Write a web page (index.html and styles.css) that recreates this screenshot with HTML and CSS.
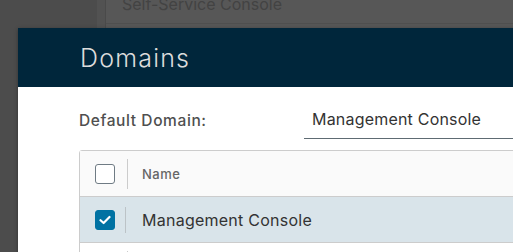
FILE: index.html
```html
<!DOCTYPE html>
<html lang="en">
<head>
  <meta charset="UTF-8">
  <meta name="viewport" content="width=device-width, initial-scale=1.0">
  <title>Domains</title>
  <link rel="stylesheet" href="styles.css">
</head>
<body>
  <div class="backdrop">
    <aside class="sidenav"><div class="sidenav-edge"></div></aside>
    <main class="content">
      <div class="content-head">Self-Service Console</div>
    </main>
  </div>

  <div class="modal">
    <header class="modal-header">
      <h2>Domains</h2>
    </header>
    <div class="modal-body">
      <div class="form-row">
        <label class="form-label">Default Domain:</label>
        <div class="select">Management Console</div>
      </div>

      <div class="datagrid">
        <div class="dg-row dg-head">
          <div class="dg-check"><span class="checkbox"></span></div>
          <div class="dg-cell">Name</div>
        </div>
        <div class="dg-row selected">
          <div class="dg-check">
            <span class="checkbox checked">
              <svg width="12" height="10" viewBox="0 0 12 10"><path d="M1.5 5.2 L4.6 8 L10.5 2" fill="none" stroke="#fff" stroke-width="2.2" stroke-linecap="round" stroke-linejoin="round"/></svg>
            </span>
          </div>
          <div class="dg-cell">Management Console</div>
        </div>
        <div class="dg-row">
          <div class="dg-check"><span class="checkbox"></span></div>
          <div class="dg-cell">Self-Service Console</div>
        </div>
      </div>
    </div>
  </div>
</body>
</html>
```

FILE: styles.css
```css
body {
  margin: 0;
  font-family: Inter, "Liberation Sans", sans-serif;
  background-color: #575757;
  overflow: hidden;
  height: 252px;
}
.backdrop {
  display: flex;
  height: 252px;
}
.sidenav {
  width: 106px;
  background-color: #4c4c4c;
  display: flex;
  justify-content: flex-end;
}
.sidenav-edge {
  width: 8px;
  background-color: #525252;
  border-right: 1px solid #4a4a4a;
}
.content {
  flex: 1;
}
.content-head {
  height: 27px;
  border-bottom: 1px solid #4f4f4f;
  padding-left: 16px;
  color: #434343;
  font-size: 16px;
  line-height: 14px;
  margin-top: -3px;
  box-sizing: border-box;
}

/* modal lies over the page */
.modal {
  position: absolute;
  left: 18px;
  top: 28px;
  width: 620px;
  background-color: #fff;
  box-shadow: 0 1px 4px rgba(0, 0, 0, 0.35);
}
.modal-header {
  height: 59px;
  background-color: #00263b;
  padding-left: 62px;
  display: flex;
  align-items: center;
}
.modal-header h2 {
  margin: 0;
  color: #dcdcdc;
  font-weight: 300;
  font-size: 25px;
  letter-spacing: 1.2px;
}
.modal-body {
  padding: 22px 0 0 61px;
}
.form-row {
  display: flex;
  align-items: flex-end;
}
.form-label {
  width: 225px;
  font-size: 15.5px;
  font-weight: 500;
  letter-spacing: 0.6px;
  color: #4f4f4f;
  padding-bottom: 9px;
}
.select {
  flex: 1;
  padding: 0 0 9px 8px;
  border-bottom: 1px solid #5e6b73;
  font-size: 16px;
  letter-spacing: 0.2px;
  color: #333;
}
.datagrid {
  margin-top: 11px;
  border: 1px solid #ccc;
  border-radius: 3px;
}
.dg-row {
  display: flex;
  align-items: center;
  height: 45px;
  border-bottom: 1px solid #ccc;
}
.dg-head {
  background-color: #fafafa;
}
.selected {
  background-color: #d9e4ea;
}
.dg-check {
  width: 48px;
  display: flex;
  justify-content: space-between;
  align-items: center;
  padding-left: 15px;
  box-sizing: border-box;
}
.dg-check::after {
  content: "";
  width: 1px;
  height: 30px;
  background-color: #ccc;
}
.selected .dg-check::after {
  height: 26px;
  background-color: #bcc3c7;
  margin-right: 2px;
}
.checkbox {
  width: 20px;
  height: 20px;
  border: 1px solid #6f7b84;
  border-radius: 3px;
  box-sizing: border-box;
  background-color: #fff;
  display: flex;
  align-items: center;
  justify-content: center;
}
.checkbox.checked {
  background-color: #0072a3;
  border-color: #0072a3;
}
.dg-cell {
  padding-left: 14px;
  font-size: 16px;
  letter-spacing: 0.25px;
  color: #333;
}
.dg-head .dg-cell {
  font-size: 13px;
  font-weight: 500;
  letter-spacing: 0.5px;
  color: #666;
}
```
